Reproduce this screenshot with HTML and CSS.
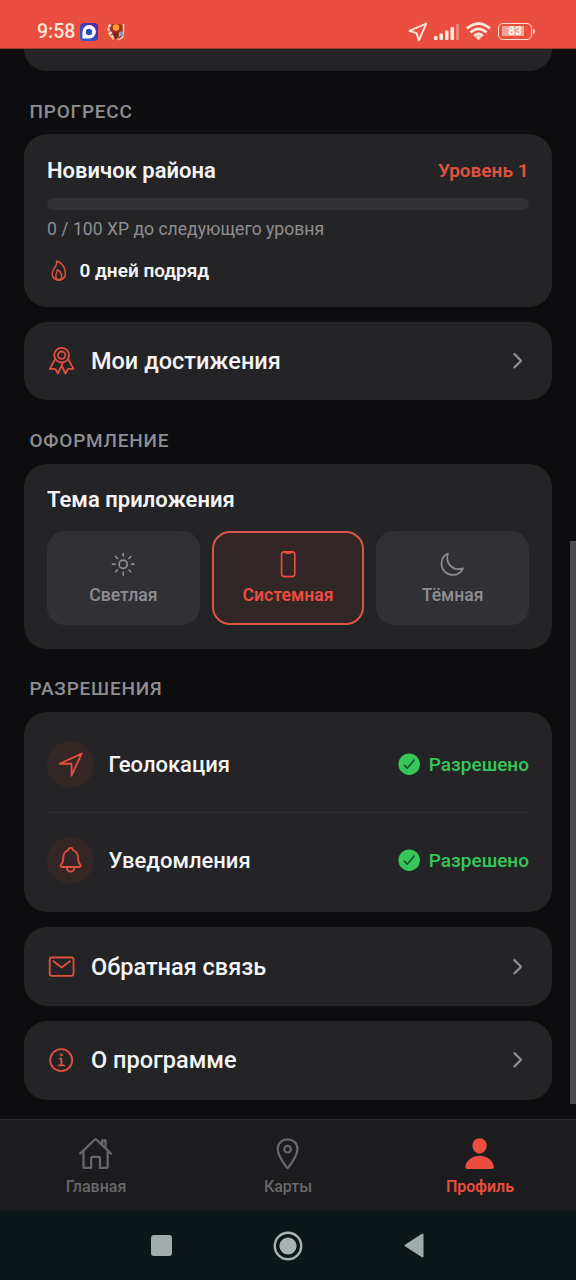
FILE: index.html
```html
<!DOCTYPE html>
<html lang="ru">
<head>
<meta charset="utf-8">
<title>Профиль</title>
<link rel="stylesheet" href="styles.css">
</head>
<body>
<div class="screen">
  <header class="status">
    <span class="time">9:58</span>
    <svg class="app-a" viewBox="0 0 18 18"><defs><linearGradient id="g" x1="0" y1="1" x2="1" y2="0"><stop offset="0" stop-color="#2563d8"/><stop offset="1" stop-color="#5b1f9c"/></linearGradient></defs><rect width="18" height="18" rx="4" fill="url(#g)"/><path d="M2.500 15.500V9a6.700 6.700 0 1 1 6.700 6.500z" fill="#fff"/><circle cx="9" cy="9" r="3.200" fill="#3049bd"/></svg>
    <svg class="app-b" viewBox="0 0 18 18"><rect x="3" y="1" width="13" height="15" rx="4" fill="#a92a20"/><path d="M3.500 1.500q-4 5 0 8l3.500 6.500" fill="none" stroke="#d9e3d8" stroke-width="2.400" stroke-dasharray="3 1"/><path d="M1.500 10l5 6.500M14 9l-4 7" stroke="#e9c67a" stroke-width="2" fill="none"/><path d="M16.500 1v6l-1 7-4 3" stroke="#f1dfd0" stroke-width="1.500" fill="none"/><path d="M13 8.500l3.500 1-1 4-3.500-1z" fill="#71a5b5"/><path d="M7 9l4 1 1 4-3 2-3-4z" fill="#872019"/><circle cx="9" cy="4.500" r="3.200" fill="#ffa425"/></svg>
    <span class="spacer"></span>
    <svg class="s-nav" viewBox="0 0 20 20"><path d="M18.300 1.500L1.500 8.800l7 2.300 2.300 7.200z" fill="none" stroke="#ffe9dc" stroke-width="1.900" stroke-linejoin="round"/></svg>
    <svg class="s-signal" viewBox="0 0 26 18" fill="#ffe9dc"><rect x="0" y="13" width="3.500" height="4" rx="1"/><rect x="5.500" y="10.500" width="3.500" height="6.500" rx="1"/><rect x="11" y="7.500" width="3.500" height="9.500" rx="1"/><rect x="16.500" y="4" width="3.500" height="13" rx="1"/><rect x="22" y="1" width="3" height="16" rx="1" opacity=".35"/></svg>
    <svg class="s-wifi" viewBox="0 0 25 19" fill="none" stroke="#ffe9dc" stroke-width="2.700"><path d="M1 6.600Q12.500-3.400 24 6.600M4.500 10.400q8-7 16 0M8.100 14q4.400-4 8.800 0"/><path d="M9.500 15.200q3-2.400 6 0l-3 3z" fill="#ffe9dc" stroke="none"/></svg>
    <span class="battery"><span class="cell">83</span><span class="cap"></span></span>
  </header>

  <main class="content">
    <div class="card card-cut"></div>

    <h2 class="label">ПРОГРЕСС</h2>
    <section class="card progress">
      <div class="row between"><span class="title">Новичок района</span><span class="level">Уровень 1</span></div>
      <div class="bar"></div>
      <p class="xp">0 / 100 XP до следующего уровня</p>
      <div class="streak">
        <svg class="i16 red" viewBox="0 0 512 512"><path d="M112 320c0-93 124-165 96-272 66 0 192 96 192 272a144 144 0 01-288 0z"/><path d="M320 368c0 57.710-32 80-64 80s-64-22.290-64-80 40-86 32-128c42 0 96 70.290 96 128z"/></svg>
        <span>0 дней подряд</span>
      </div>
    </section>

    <a class="card link">
      <svg class="i20 red" viewBox="0 0 512 512"><circle cx="256" cy="160" r="128"/><circle cx="256" cy="160" r="64"/><path d="M143.650 227.820L48 400l86.860-.42a16 16 0 0113.820 7.800L192 480l88.330-194.320M366.540 224L464 400l-86.860-.42a16 16 0 00-13.820 7.800L320 480l-64-140.800"/></svg>
      <span class="link-text">Мои достижения</span>
      <svg class="chev" viewBox="0 0 512 512"><path d="M184 112l144 144-144 144"/></svg>
    </a>

    <h2 class="label label-look">ОФОРМЛЕНИЕ</h2>
    <section class="card theme">
      <span class="title">Тема приложения</span>
      <div class="options">
        <div class="option"><svg class="i18" viewBox="0 0 512 512"><path d="M256 48v48M256 416v48M403.080 108.920l-33.940 33.940M142.860 369.140l-33.940 33.940M464 256h-48M96 256H48M403.080 403.080l-33.940-33.940M142.860 142.860l-33.940-33.940"/><circle cx="256" cy="256" r="80"/></svg><span>Светлая</span></div>
        <div class="option active"><svg class="i18" viewBox="0 0 512 512"><rect x="128" y="16" width="256" height="480" rx="48"/><path d="M176 16h24a8 8 0 018 8 16 16 0 0016 16h64a16 16 0 0016-16 8 8 0 018-8h24"/></svg><span>Системная</span></div>
        <div class="option"><svg class="i18" viewBox="0 0 512 512"><path d="M160 136c0-30.620 4.510-61.610 16-88C99.570 81.270 48 159.320 48 248c0 119.290 96.710 216 216 216 88.680 0 166.730-51.570 200-128-26.390 11.490-57.380 16-88 16-119.290 0-216-96.710-216-216z"/></svg><span>Тёмная</span></div>
      </div>
    </section>

    <h2 class="label label-perm">РАЗРЕШЕНИЯ</h2>
    <section class="card perms">
      <div class="perm">
        <span class="disc"><svg class="i20 red" viewBox="0 0 512 512"><path d="M448 64L64 240.140h200a8 8 0 018 8V448z"/></svg></span>
        <span class="perm-name">Геолокация</span>
        <svg class="i18 check" viewBox="0 0 512 512"><circle cx="256" cy="256" r="208"/><path d="M352 176L217.600 336 160 272"/></svg>
        <span class="granted">Разрешено</span>
      </div>
      <div class="perm">
        <span class="disc"><svg class="i20 red" viewBox="0 0 512 512"><path d="M427.680 351.430C402 320 383.870 304 383.870 217.350 383.870 138 343.350 109.730 310 96c-4.430-1.820-8.600-6-9.950-10.550C294.200 65.540 277.800 48 256 48s-38.210 17.550-44 37.470c-1.350 4.600-5.520 8.710-9.950 10.530-33.390 13.750-73.870 41.920-73.870 121.350C128.130 304 110 320 84.320 351.430 73.680 364.450 83 384 101.610 384h308.880c18.510 0 27.770-19.610 17.190-32.570zM320 384v16a64 64 0 01-128 0v-16"/></svg></span>
        <span class="perm-name">Уведомления</span>
        <svg class="i18 check" viewBox="0 0 512 512"><circle cx="256" cy="256" r="208"/><path d="M352 176L217.600 336 160 272"/></svg>
        <span class="granted">Разрешено</span>
      </div>
    </section>

    <a class="card link">
      <svg class="i20 red" viewBox="0 0 512 512"><rect x="48" y="96" width="416" height="320" rx="40"/><path d="M112 160l144 112 144-112"/></svg>
      <span class="link-text">Обратная связь</span>
      <svg class="chev" viewBox="0 0 512 512"><path d="M184 112l144 144-144 144"/></svg>
    </a>
    <a class="card link">
      <svg class="i20 red" viewBox="0 0 512 512"><circle cx="248" cy="248" r="192"/><path d="M220 220h32v116M208 340h88"/><circle cx="248" cy="156" r="18" fill="currentColor" stroke-width="16"/></svg>
      <span class="link-text">О программе</span>
      <svg class="chev" viewBox="0 0 512 512"><path d="M184 112l144 144-144 144"/></svg>
    </a>
    <div class="scrollbar"></div>
  </main>

  <nav class="tabs">
    <div class="tab"><svg class="i24" viewBox="0 0 512 512"><path d="M80 212v236a16 16 0 0016 16h96V328a24 24 0 0124-24h80a24 24 0 0124 24v136h96a16 16 0 0016-16V212M480 256L266.890 52c-5-5.280-16.690-5.340-21.780 0L32 256M400 179V64h-48v69"/></svg><span>Главная</span></div>
    <div class="tab"><svg class="i24" viewBox="0 0 512 512"><path d="M256 48c-79.500 0-144 61.390-144 137 0 87 96 224.870 131.250 272.490a15.770 15.770 0 0025.500 0C304 409.890 400 272.070 400 185c0-75.610-64.500-137-144-137z"/><circle cx="256" cy="192" r="48"/></svg><span>Карты</span></div>
    <div class="tab current"><svg class="i24 solid" viewBox="0 0 512 512"><path d="M332.640 64.580C313.180 43.570 286 32 256 32c-30.160 0-57.430 11.500-76.800 32.380-19.580 21.110-29.120 49.800-26.880 80.780C156.760 206.280 203.270 256 256 256s99.160-49.710 103.670-110.820c2.270-30.700-7.330-59.330-27.030-80.600zM432 480H80a31 31 0 01-24.200-11.130c-6.500-7.770-9.120-18.380-7.180-29.110C57.060 392.940 83.400 353.610 124.800 326c36.780-24.510 83.370-38 131.200-38s94.420 13.500 131.200 38c41.400 27.600 67.740 66.930 76.180 113.750 1.940 10.730-.68 21.340-7.180 29.110A31 31 0 01432 480z"/></svg><span>Профиль</span></div>
  </nav>

  <footer class="system">
    <span class="recent"></span>
    <svg class="home" viewBox="0 0 30 30"><circle cx="15" cy="15" r="13.200" fill="none" stroke="#aab2b4" stroke-width="2.400"/><circle cx="15" cy="15" r="8.600" fill="#aab2b4"/></svg>
    <svg class="back" viewBox="0 0 20 25"><path d="M18.500 1.500v22L1.500 12.500z" fill="#a4abad" stroke="#a4abad" stroke-width="2" stroke-linejoin="round"/></svg>
  </footer>
</div>
</body>
</html>
```
FILE: styles.css
```css
* { box-sizing: border-box; margin: 0; padding: 0; }
body { background: #0d0d0f; font-family: Roboto, "Noto Sans", sans-serif; color: #f4f4f6; }
svg { display: block; flex: none; overflow: visible; }
.screen { width: 576px; height: 1280px; display: flex; flex-direction: column; overflow: hidden; }

.status { height: 49px; flex: none; background: #e94e3f; border-bottom: 1px solid #9b3930; display: flex; align-items: center; padding: 15px 41px 0 37px; }
.time { font-size: 19.500px; font-weight: 500; color: #ffe3d6; width: 43px; line-height: 24px; }
.app-a { width: 18px; height: 18px; margin-right: 9px; }
.app-b { width: 18px; height: 18px; }
.spacer { flex: 1; }
.s-nav { width: 20px; height: 20px; margin-right: 6px; }
.s-signal { width: 26px; height: 18px; margin-right: 6px; }
.s-wifi { width: 25px; height: 19px; margin-right: 7px; }
.battery { display: flex; align-items: center; gap: 1px; }
.cell { width: 34px; height: 17px; border: 1.500px solid #ffe0d0; border-radius: 5px; background: linear-gradient(90deg, #f4a598, #f4a598) 3px 2px / 22px 10px no-repeat; font-size: 12px; font-weight: 700; line-height: 14px; text-align: center; color: #fff3ea; }
.cap { width: 2px; height: 5px; background: #ffe0d0; border-radius: 0 2px 2px 0; }

.content { flex: none; height: 1070px; padding: 0 24px; position: relative; }
.card { background: #242426; border-radius: 23px; }
.card-cut { height: 22px; border-radius: 0 0 22px 22px; }
.label { font-size: 19px; line-height: 22px; font-weight: 500; letter-spacing: 0.780px; color: #8e8e93; margin: 30px 0 11px 5.500px; }
.label-look { margin-top: 29.700px; margin-bottom: 12px; }
.label-perm { margin-top: 29.200px; margin-bottom: 12px; }

.progress { height: 172.700px; padding: 22.500px 23.500px 0 23px; }
.row { display: flex; align-items: center; }
.between { justify-content: space-between; }
.title { font-size: 22px; line-height: 28px; font-weight: 600; }
.level { font-size: 19px; font-weight: 600; color: #e0533f; }
.bar { height: 12px; border-radius: 6px; background: #303035; margin-top: 13.500px; }
.xp { font-size: 17.600px; line-height: 22px; color: #8e8e93; margin-top: 8px; }
.streak { display: flex; align-items: center; gap: 9px; font-size: 19px; font-weight: 600; line-height: 24px; margin-top: 19px; }

.i16, .i18, .i20, .i24 { fill: none; stroke: currentColor; stroke-width: 32; stroke-linecap: round; stroke-linejoin: round; }
.i16 { width: 23.500px; height: 23.500px; }
.i18 { width: 26.400px; height: 26.400px; }
.i20 { width: 29.300px; height: 29.300px; }
.i24 { width: 35.200px; height: 35.200px; }
.solid { fill: currentColor; stroke: none; }
.red { color: #e0503f; }

.link { display: flex; align-items: center; height: 78.600px; padding: 0 23px 0 22.700px; margin-top: 15px; }
.link-text { flex: 1; margin-left: 15px; font-size: 23.500px; font-weight: 500; line-height: 28px; }
.chev { width: 23.500px; height: 23.500px; fill: none; stroke: #8e8e93; stroke-width: 48; stroke-linecap: round; stroke-linejoin: round; }

.theme { height: 184.800px; padding: 22px 23px; }
.theme .title { display: block; }
.options { display: grid; grid-template-columns: repeat(3, 1fr); gap: 12px; margin-top: 17px; }
.option { height: 94px; border-radius: 18px; background: #303035; color: #8e8e93; display: flex; flex-direction: column; align-items: center; padding-top: 20px; font-size: 17.600px; font-weight: 500; line-height: 22px; gap: 7px; }
.active { background: #332626; color: #ec4d40; border: 2px solid #dc5549; padding-top: 18px; font-weight: 600; }

.perms { height: 200.400px; padding: 5px 23px; }
.perm { display: flex; align-items: center; height: 95.300px; }
.perm + .perm { border-top: 1px solid #2d2d30; height: 94.500px; }
.disc { width: 47px; height: 47px; border-radius: 50%; background: #352626; display: flex; align-items: center; justify-content: center; }
.perm-name { flex: 1; margin-left: 14.500px; font-size: 22px; font-weight: 500; }
.check { color: #35c759; }
.check circle { fill: currentColor; stroke: none; }
.check path { stroke: #174d24; }
.granted { margin-left: 6px; font-size: 19px; font-weight: 500; color: #35c759; }

.scrollbar { position: absolute; right: 0; top: 492px; width: 6px; height: 563px; background: #4b4b4d; }

.tabs { flex: none; height: 92px; background: #1c1c1e; border-top: 1px solid #2b2b2e; display: grid; grid-template-columns: repeat(3, 1fr); }
.tab { display: flex; flex-direction: column; align-items: center; padding-top: 16px; gap: 6px; color: #68686c; font-size: 16px; font-weight: 500; line-height: 20px; }
.current { color: #e94e3f; font-weight: 600; }

.system { flex: none; height: 69px; background: #0b1718; display: flex; align-items: center; padding: 0 152px 0 151px; justify-content: space-between; }
.recent { width: 21px; height: 21px; border-radius: 3px; background: #a4abad; }
.home { width: 30px; height: 30px; }
.back { width: 20px; height: 25px; }
```
